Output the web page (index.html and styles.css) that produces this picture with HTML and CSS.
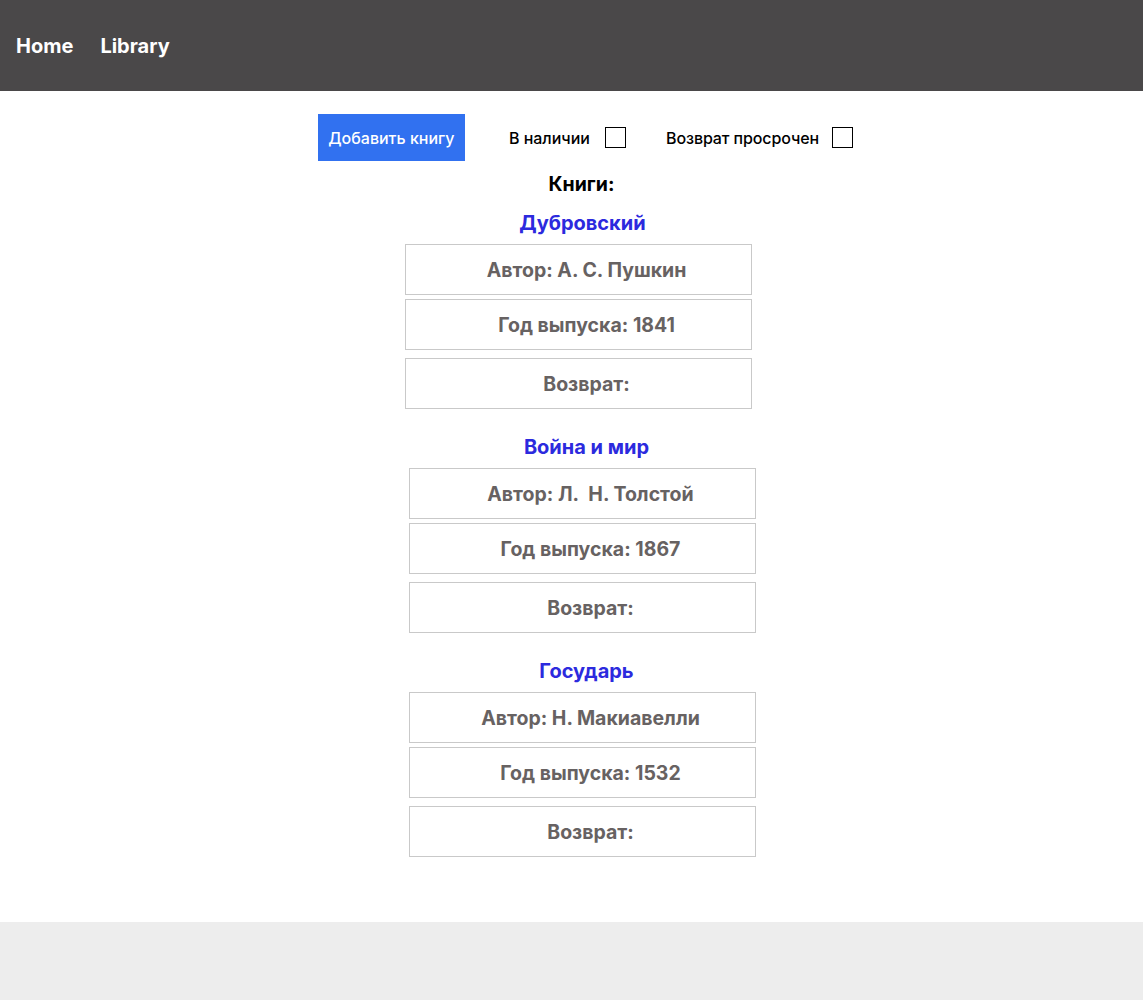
FILE: index.html
```html
<!DOCTYPE html>
<html lang="ru">
<head>
<meta charset="utf-8">
<title>Library</title>
<link rel="stylesheet" href="styles.css">
</head>
<body>
<header class="topbar">
  <nav class="nav">
    <a class="nav-link" href="#">Home</a>
    <a class="nav-link" href="#">Library</a>
  </nav>
</header>
<main class="content">
  <div class="toolbar">
    <button class="add-btn" type="button">Добавить книгу</button>
    <label class="filter">В наличии <span class="check"></span></label>
    <label class="filter filter-late">Возврат просрочен <span class="check"></span></label>
  </div>
  <h2 class="books-heading">Книги:</h2>
  <div class="books">
    <section class="book book-first">
      <h3 class="book-title">Дубровский</h3>
      <div class="field">Автор: А. С. Пушкин</div>
      <div class="field">Год выпуска: 1841</div>
      <div class="field field-return">Возврат:</div>
    </section>
    <section class="book">
      <h3 class="book-title">Война и мир</h3>
      <div class="field">Автор: Л.&nbsp; Н. Толстой</div>
      <div class="field">Год выпуска: 1867</div>
      <div class="field field-return">Возврат:</div>
    </section>
    <section class="book">
      <h3 class="book-title">Государь</h3>
      <div class="field">Автор: Н. Макиавелли</div>
      <div class="field">Год выпуска: 1532</div>
      <div class="field field-return">Возврат:</div>
    </section>
  </div>
</main>
<footer class="footer"></footer>
</body>
</html>
```

FILE: styles.css
```css
* { box-sizing: border-box; }
html, body { margin: 0; padding: 0; }
body {
  font-family: Inter, "Noto Sans", sans-serif;
  background: #ffffff;
  color: #000;
}
.topbar {
  height: 91px;
  background: #4a4849;
  display: flex;
  align-items: center;
  padding-left: 16px;
}
.nav { display: flex; gap: 27px; }
.nav-link {
  color: #ffffff;
  text-decoration: none;
  font-weight: 700;
  font-size: 20px;
  line-height: 24px;
}
.content {
  padding: 23px 0 65px;
  display: flex;
  flex-direction: column;
  align-items: center;
}
.toolbar {
  display: flex;
  align-items: center;
  margin-left: 28px;
}
.add-btn {
  background: #3171f0;
  color: #ffffff;
  border: none;
  height: 47px;
  width: 147px;
  padding: 0;
  font-family: Inter, sans-serif;
  font-weight: 500;
  font-size: 16px;
  margin-right: 44px;
}
.filter {
  display: flex;
  align-items: center;
  font-weight: 500;
  font-size: 16px;
  gap: 15px;
  margin-right: 40px;
}
.filter-late { letter-spacing: -0.1px; gap: 13px; }
.filter:last-child { margin-right: 0; }
.check {
  width: 21px;
  height: 21px;
  border: 1px solid #000;
  background: #fff;
}
.books-heading {
  margin: 12px 0 0 20px;
  font-size: 19.5px;
  line-height: 22px;
  font-weight: 700;
}
.books {
  display: flex;
  flex-direction: column;
  align-items: center;
  margin-top: 17px;
  padding-left: 22px;
}
.book {
  display: flex;
  flex-direction: column;
  align-items: center;
  margin-top: 27px;
}
.book-first { margin-top: 0; margin-right: 8px; }
.book-title {
  margin: 0 0 9px;
  padding-left: 8px;
  color: #2c2ade;
  font-size: 20px;
  line-height: 23px;
  font-weight: 700;
}
.field {
  width: 347px;
  height: 51px;
  border: 1px solid #c9c9c9;
  display: flex;
  align-items: center;
  justify-content: center;
  padding-left: 16px;
  color: #676262;
  font-weight: 700;
  font-size: 19.5px;
  margin-bottom: 4px;
}
.field-return { margin-top: 4px; margin-bottom: 0; }
.footer {
  height: 78px;
  background: #ededed;
}
```
